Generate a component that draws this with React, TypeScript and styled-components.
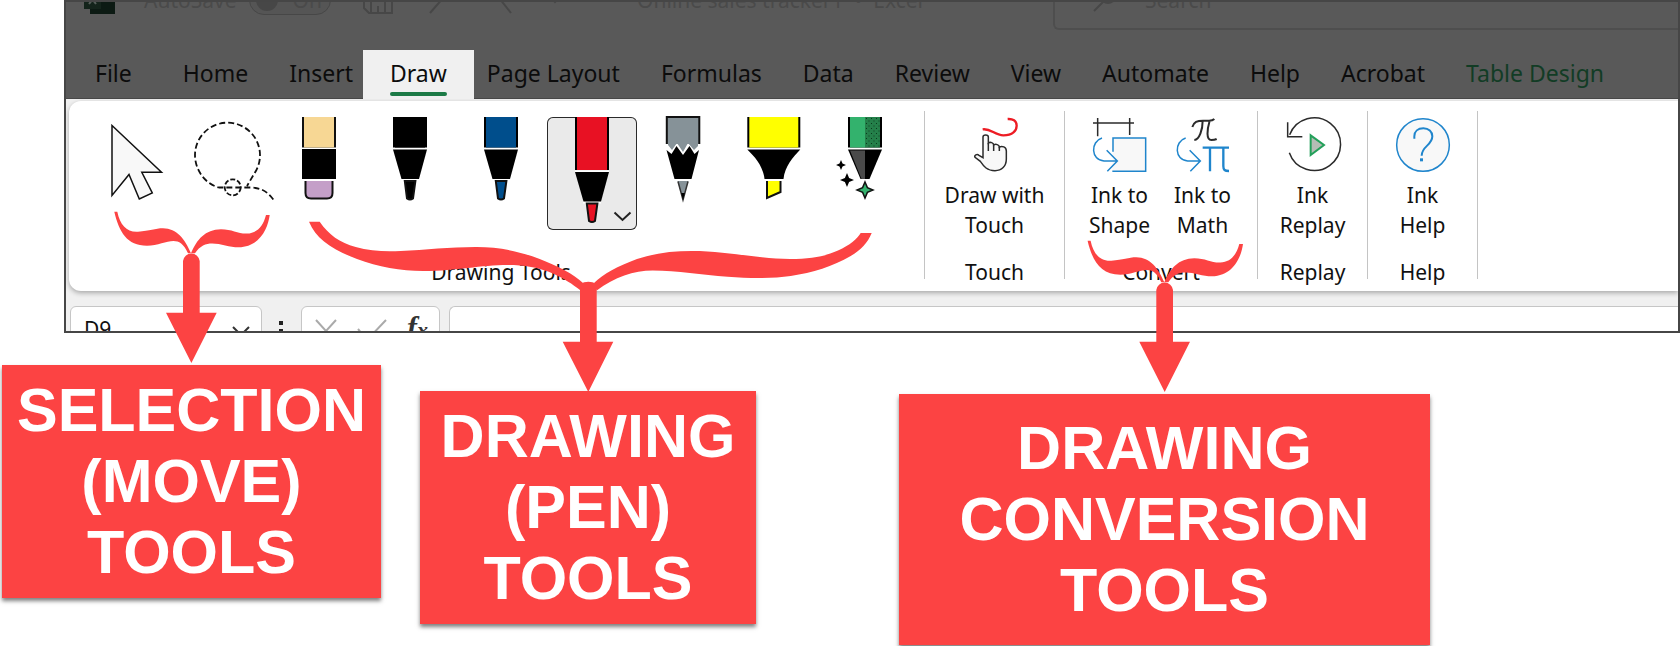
import React from 'react';
import styled, { createGlobalStyle } from 'styled-components';

const RED = '#fc4343';
const UI_FONT = '"Noto Sans", "Open Sans", sans-serif';

const GlobalStyle = createGlobalStyle`
  body { margin: 0; background: #fff; }
  *, *::before, *::after { box-sizing: border-box; }
  button, input { font: inherit; color: inherit; border: 0; background: none; padding: 0; margin: 0; }
  svg { display: block; overflow: visible; }
`;

const Page = styled.main`
  position: relative;
  overflow: hidden;
  font-family: ${UI_FONT};
  color: #111;
`;

const Window = styled.section`
  margin-left: 64px;
  border: 2px solid #464646;
  overflow: hidden;
  background: #f0f0f0;
`;

/* Title bar */
const TitleBar = styled.header`
  display: flex;
  align-items: center;
  height: 64px;
  margin-top: -34px;
  padding-left: 18px;
  background: #595959;
  color: #4a4a4a;
  font-size: 21px;
  line-height: 30px;
  white-space: nowrap;
`;
const AutoSave = styled.label`
  display: flex;
  align-items: center;
  gap: 12px;
  width: 219px;
  margin-left: 29px;
`;
const Toggle = styled.button`
  display: flex;
  align-items: center;
  gap: 15px;
  width: 82px;
  height: 30px;
  padding-left: 6px;
  border: 1px solid #474747;
  border-radius: 15px;
  background: #555;
  line-height: 28px;
`;
const Knob = styled.span`
  width: 22px;
  height: 22px;
  border-radius: 50%;
  background: #474747;
`;
const QuickAccess = styled.div`
  display: flex;
  align-items: center;
  gap: 36px;
  width: 274px;
`;
const DocTitle = styled.span`
  width: 416px;
`;
const SearchBox = styled.label`
  display: flex;
  flex: 1;
  align-items: center;
  gap: 30px;
  height: 60px;
  padding-left: 38px;
  border: 2px solid #4e4e4e;
  border-right: 0;
  border-radius: 6px 0 0 6px;

  input { flex: 1; min-width: 0; }
  input::placeholder { color: #4a4a4a; opacity: 1; }
`;

/* Ribbon tabs */
const TabRow = styled.nav`
  display: flex;
  gap: 1px;
  padding: 18px 0 0 9px;
  background: #595959;
  box-shadow: inset 0 -1px #484848;
`;
const Tab = styled.button<{ $active?: boolean; $accent?: boolean; $first?: boolean }>`
  display: flex;
  flex-direction: column;
  align-items: center;
  height: 49px;
  padding: ${p => (p.$active ? '7px 27px 0' : '7px 20px 0')};
  margin: ${p => (p.$active ? '0 -8px 0 -11px' : p.$first ? '0 10px 0 0' : '0')};
  font-size: 23px;
  line-height: 32px;
  white-space: nowrap;
  color: ${p => (p.$accent ? '#123c25' : '#0c0c0c')};
  background: ${p => (p.$active ? '#f0f0f0' : 'none')};

  &::after {
    content: '';
    width: 100%;
    height: 4px;
    margin-top: 3px;
    border-radius: 2px;
    background: ${p => (p.$active ? '#1c7a46' : 'none')};
  }
`;

/* Ribbon */
const Ribbon = styled.div`
  display: flex;
  height: 190px;
  margin: 2px 0 0 3px;
  border-radius: 12px 0 0 12px;
  background: #fff;
  box-shadow: 0 2px 5px rgba(0, 0, 0, 0.3);
`;
const Group = styled.section<{ $pad: string }>`
  display: flex;
  flex-direction: column;
  justify-content: space-between;
  align-items: center;
  padding: ${p => p.$pad};
`;
const GroupLabel = styled.span`
  font-size: 21px;
  line-height: 24px;
`;
const Divider = styled.span`
  width: 1px;
  margin: 10px 0 12px;
  background: #c4c4c4;
`;
const Tools = styled.div`
  display: flex;
  gap: 1px;
`;
const Tool = styled.button<{ $selected?: boolean }>`
  width: 90px;
  height: 113px;
  border-radius: 6px;
  background: ${p => (p.$selected ? '#eaeaea' : 'none')};
  box-shadow: ${p => (p.$selected ? 'inset 0 0 0 1px #2a2a2a' : 'none')};
`;
const Commands = styled.div`
  display: flex;
`;
const Command = styled.button<{ $width: number }>`
  display: flex;
  flex-direction: column;
  align-items: center;
  gap: 8px;
  width: ${p => p.$width}px;
  padding-top: 1px;
  font-size: 21px;
  line-height: 30px;
  text-align: center;
`;

/* Formula bar */
const FormulaBar = styled.div`
  display: flex;
  height: 40px;
  padding: 15px 0 0 4px;
`;
const Field = styled.div<{ $width?: number; $open?: boolean }>`
  display: flex;
  flex: ${p => (p.$width ? 'none' : '1')};
  align-items: center;
  justify-content: space-between;
  width: ${p => (p.$width ? `${p.$width}px` : 'auto')};
  height: 50px;
  padding: 0 11px 0 13px;
  border: 1px solid #c6c6c6;
  border-right-width: ${p => (p.$open ? 0 : 1)}px;
  border-radius: ${p => (p.$open ? '6px 0 0 6px' : '6px')};
  background: #fff;
  font-size: 21px;

  input { width: 100%; min-width: 0; padding-bottom: 4px; }
`;
const Grip = styled.svg`
  flex: none;
  margin: 15px 18px 0 17px;
`;
const FxButton = styled.button`
  padding-bottom: 8px;
  font: italic bold 30px/40px "Liberation Serif", serif;
  color: #333;

  sub { font-size: 22px; line-height: 0; vertical-align: 0; }
`;
const Spacer = styled.span`
  width: 9px;
`;

/* Annotations */
const Pointers = styled.svg`
  position: absolute;
  top: 0;
  left: 0;
  pointer-events: none;
`;
const Callouts = styled.div`
  display: flex;
  align-items: flex-start;
  padding: 32px 0 1px 2px;
`;
const Callout = styled.p<{ $width: number; $top: number; $left: number; $pad: number }>`
  flex: none;
  width: ${p => p.$width}px;
  margin: ${p => p.$top}px 0 0 ${p => p.$left}px;
  padding: ${p => p.$pad}px 0;
  background: ${RED};
  box-shadow: 0 3px 4px rgba(0, 0, 0, 0.5);
  color: #fff;
  font: bold 61px/71px "Liberation Sans", Arial, sans-serif;
  text-align: center;

  span { display: block; }
`;

const Art = ({ children }: { children: React.ReactNode }) => (
  <svg width="90" height="113" viewBox="0 0 90 113" aria-hidden="true">{children}</svg>
);

const PointerArt = () => (
  <Art>
    <path d="M20 8.5 69.5 55.3H49.8L60.3 76l-13 6L37 57.5 20 78.5Z" fill="#f8f8f8" stroke="#111" strokeWidth="1.5" />
  </Art>
);
const LassoArt = () => (
  <Art>
    <g fill="none" stroke="#111" strokeWidth="1.8" strokeDasharray="6 3">
      <path d="M90.3 82.5C84 74 78 71 68 70.5H36C22 67 12 53 12 38a32.5 32.5 0 1 1 59 19l-7 12" />
      <circle cx="49.7" cy="70.3" r="8" strokeDasharray="5 2" />
    </g>
  </Art>
);
const EraserArt = () => (
  <Art>
    <path d="M28 0h34v30.500H28z" fill="#111" />
    <path d="M30 0h30v30.500H30z" fill="#f7d794" />
    <path d="M28 32h34v30H28z" />
    <path d="M31.500 64v12q0 5.500 5.500 5.500h16q5.500 0 5.500-5.500V64" fill="#c49fc8" stroke="#111" strokeWidth="2" />
  </Art>
);
const PenArt = ({ color, drop = 0 }: { color: string; drop?: number }) => (
  <Art>
    <path d={`M28 0h34v${30.5 + drop}H28z`} />
    <path d={`M30 0h30v${30.5 + drop}H30z`} fill={color} />
    <g transform={`translate(0 ${drop})`}>
      <path d="M28 31h34v1.500H28zM36 62h18v2H36z" fill="#fff" />
      <path d="M28 32.500h34L54 62H36.500z" />
      <path d="M39.800 64h10.600l-2.400 17.500q-3 2-6 0z" fill={color} stroke="#111" strokeWidth="2" />
    </g>
  </Art>
);
const PencilArt = () => (
  <Art>
    <path d="M28.800 27V0h32.500v27" fill="#869298" stroke="#111" strokeWidth="2" />
    <path d="M30 1h30v28l-4 4-6-7-5 9-6-9-5 7-4-5z" fill="#869298" />
    <path d="M28.500 33l5 4 5-8 6.500 9 6.500-9 5 8 4.500-4L53.500 62h-17z" />
    <path d="M39.500 64h11L45 83z" fill="#869298" />
    <path d="M40 64.500 45 83l5-18.500" fill="none" stroke="#333" strokeWidth="1.500" />
    <path d="M43.200 76h3.600L45 83z" />
  </Art>
);
const MarkerArt = () => (
  <Art>
    <path d="M18.300 0h53v30.500h-53z" />
    <path d="M20.300 0h49v30.500h-49z" fill="#ff0" />
    <path d="M18.300 32.500h53C64 40 56 49 54.500 62h-19C34 49 26 40 18.300 32.500z" />
    <path d="M38 64v17l13.500-6V64" fill="#ff0" stroke="#111" strokeWidth="2" />
  </Art>
);
const star = (x: number, y: number, r: number) => {
  const k = r * 0.3;
  return `M${x} ${y - r}L${x + k} ${y - k} ${x + r} ${y} ${x + k} ${y + k} ${x} ${y + r} ${x - k} ${y + k} ${x - r} ${y} ${x - k} ${y - k}Z`;
};
const SparklePenArt = () => (
  <Art>
    <defs>
      <pattern id="specks" width="5" height="5" patternUnits="userSpaceOnUse">
        <rect width="5" height="5" fill="#24804a" />
        <path d="M1 1h1v1H1zM3.500 3.500h1v1h-1z" fill="#0a3a1e" />
      </pattern>
    </defs>
    <path d="M28 0h34v30.500H28z" />
    <path d="M30 0h15v30.500H30z" fill="#33b26d" />
    <path d="M45 0h15v30.500H45z" fill="url(#specks)" />
    <path d="M28 32.500h34L49.500 62h-9z" />
    <path d="M30 33.500h15V62h-3.500z" fill="#4a4a4a" />
    <path d={star(21, 48, 5)} />
    <path d={star(27, 63, 7)} />
    <path d={star(45, 73, 8)} fill="#33b26d" stroke="#111" strokeWidth="1.500" />
  </Art>
);

/* Command icons are drawn on a grid three times finer than their 54px box. */
const Icon = ({ children }: { children: React.ReactNode }) => (
  <svg width="54" height="54" viewBox="0 0 162 162" fill="none" stroke="#2b2b2b" strokeWidth="4.500" aria-hidden="true">{children}</svg>
);
const BLUE = '#1f85cc';
const TouchIcon = () => (
  <Icon>
    <path d="M44 34C68 30 80 52 106 52c28 0 40-14 40-29 0-15-12-21-27-20" stroke="#ed1c24" strokeWidth="7" />
    <path d="M45 119V57c0-8 16-8 16 0v18c6-4 16-1 16 6 6-4 17-1 17 6 8-4 21-1 21 12v24c0 22-14 35-34 35-24 0-33-12-44-28L21 118c-3-6 6-11 12-6z" fill="#f8f8f8" />
    <path d="M61 75v24M77 80v19M94 86v13" />
  </Icon>
);
const ShapeIcon = () => (
  <Icon>
    <path d="M60 101V60h98v100H58" fill="#f8f8f8" stroke={BLUE} />
    <path d="M0 15h123M14 0v55M110 0v51" />
    <path d="M27 60C-8 71-7 126 33 129h39M41 97l32 32-30 31" stroke={BLUE} />
  </Icon>
);
const MathIcon = () => (
  <Icon>
    <path d="M49 27c5-15 14-19 32-19h18c9 0 12-1 16-5M80 8c0 27-10 57-25 58M101 8c-8 27-11 58 5 58 8 0 12-1 16-3" strokeWidth="6" />
    <path d="M80 89h79M102 89v71M142 89v55c0 12 4 15 17 15" stroke={BLUE} strokeWidth="7" />
    <path d="M29 60C-6 71-5 126 35 129h37M41 97l32 32-30 31" stroke={BLUE} />
  </Icon>
);
const ReplayIcon = () => (
  <Icon>
    <path d="M10 104A79 79 0 1 0 11 50M5 13v43h44" />
    <path d="M74 52l40 29-40 30z" fill="#b5bdb5" stroke="#23a05a" strokeWidth="6" />
  </Icon>
);
const HelpIcon = () => (
  <Icon>
    <circle cx="81" cy="81" r="79" fill="#f8f8f8" stroke={BLUE} />
    <path d="M55 62v-7c0-15 11-24 27-24s27 10 27 24c0 27-32 29-32 58" stroke={BLUE} strokeWidth="6" />
    <path d="M72 121h9v9h-9z" fill={BLUE} stroke="none" />
  </Icon>
);

const Line = ({ d, width, height, color = '#474747', stroke = 2 }: { d: string; width: number; height: number; color?: string; stroke?: number }) => (
  <svg width={width} height={height} viewBox={`0 0 ${width} ${height}`} fill="none" stroke={color} strokeWidth={stroke} aria-hidden="true">
    <path d={d} />
  </svg>
);

const TABS = ['File', 'Home', 'Insert', 'Draw', 'Page Layout', 'Formulas', 'Data', 'Review', 'View', 'Automate', 'Help', 'Acrobat', 'Table Design'];

const TOOLS: { name: string; art: React.ReactNode; selected?: boolean }[] = [
  { name: 'Select', art: <PointerArt /> },
  { name: 'Lasso select', art: <LassoArt /> },
  { name: 'Eraser', art: <EraserArt /> },
  { name: 'Black pen', art: <PenArt color="#000" /> },
  { name: 'Blue pen', art: <PenArt color="#004e8c" /> },
  { name: 'Red pen', art: <PenArt color="#e81123" drop={22.5} />, selected: true },
  { name: 'Pencil', art: <PencilArt /> },
  { name: 'Highlighter', art: <MarkerArt /> },
  { name: 'Action pen', art: <SparklePenArt /> },
];

const GROUPS = [
  { label: 'Touch', pad: '16px 18px 7px', items: [{ lines: ['Draw with', 'Touch'], width: 103, icon: <TouchIcon /> }] },
  {
    label: 'Convert',
    pad: '16px 13px 7px',
    items: [
      { lines: ['Ink to', 'Shape'], width: 83, icon: <ShapeIcon /> },
      { lines: ['Ink to', 'Math'], width: 83, icon: <MathIcon /> },
    ],
  },
  { label: 'Replay', pad: '16px 13px 7px', items: [{ lines: ['Ink', 'Replay'], width: 83, icon: <ReplayIcon /> }] },
  { label: 'Help', pad: '16px 13px 7px', items: [{ lines: ['Ink', 'Help'], width: 83, icon: <HelpIcon /> }] },
];

const CALLOUTS = [
  { lines: ['SELECTION', '(MOVE)', 'TOOLS'], width: 379, top: 0, left: 0, pad: 10 },
  { lines: ['DRAWING', '(PEN)', 'TOOLS'], width: 336, top: 26, left: 39, pad: 10 },
  { lines: ['DRAWING', 'CONVERSION', 'TOOLS'], width: 531, top: 29, left: 143, pad: 19 },
];

const SmallBrace = () => (
  <g>
    <path d="M114.300 211.700h3C120 225 127 232.500 138 231.700c12-.7 17-3.400 25-3.400 14 .2 22 11 28 25 6-14 14-23.500 30-24 11 0 17 4.600 26 4.300 10-.6 16-7 19-18.600h3.700C268 228 260 247 238.500 247.300c-15 0-32-12-43.500 6h-7c-10-22-22-7.600-41-7.600-20 0-28-14-32.700-34z" />
    <path d="M183 261a8.400 8.400 0 0 1 16.700 0v51.700h17L191.400 363 166 312.700h17z" />
  </g>
);
const WideBrace = () => (
  <g>
    <path d="M309 221.700h10.700c9 13 20 21 36 25.300 14 4 30 4.800 45 3.900 25-1 50-4 76-3.900 22 0 42 4 63 12 18 7 34 15 43.300 24l-3 7c-8-6-15-11-26-16-16-7-30-9-46-9-28 0-50 5.900-85 6-22 0-45-4-66-12-24-9-41-20-48-37.300z" />
    <path d="M594 283c9-9 24-17 43-24 18-6 36-8 55-8 36 0 66 8 98 8 22 0 36-3 48-8.500 12-5.500 19-11.500 22.700-17.500h11c-4 10-11 17-21 23-18 10.500-38 16.500-60 20-18 2.500-40 2.500-63 .7-26-2-50-6.300-75-6.300-19 0-38 6.600-56 20z" />
    <path d="M580 284q8.300-4.500 16.700 0v57.700h16.600L588.300 392l-25.600-50.300H580z" />
  </g>
);

export default function App() {
  return (
    <Page>
      <GlobalStyle />
      <Window>
        <TitleBar>
          <svg width="31" height="30" viewBox="0 0 31 30" aria-hidden="true">
            <path d="M6 0h25v29H6z" fill="#0c1a13" />
            <path d="M0 5h17v19H0z" fill="#14241b" />
            <path d="M5 10l7 9M12 10l-7 9" stroke="#555e59" strokeWidth="2" />
          </svg>
          <AutoSave>
            AutoSave
            <Toggle type="button"><Knob />On</Toggle>
          </AutoSave>
          <QuickAccess>
            <Line width={30} height={28} d="M1 1h28v26H6l-5-5zM8 27V15h14v12M15 27v-7" />
            <Line width={24} height={28} d="M16 1H23M22 3 1 27" />
            <Line width={24} height={28} d="M3 3 22 27" />
            <Line width={12} height={8} d="M1 1l5 5 5-5" />
          </QuickAccess>
          <DocTitle>Online sales tracker1 &nbsp;•&nbsp; Excel</DocTitle>
          <SearchBox>
            <Line width={22} height={24} d="M1 23 10 14M8 8a7 7 0 1 0 14 0 7 7 0 1 0-14 0" />
            <input aria-label="Search" placeholder="Search" />
          </SearchBox>
        </TitleBar>

        <TabRow aria-label="Ribbon tabs">
          {TABS.map(name => (
            <Tab key={name} type="button" $first={name === 'File'} $active={name === 'Draw'} $accent={name === 'Table Design'}>
              {name}
            </Tab>
          ))}
        </TabRow>

        <Ribbon>
          <Group $pad="16px 14px 7px 23px">
            <Tools>
              {TOOLS.map(t => (
                <Tool key={t.name} type="button" aria-label={t.name} aria-pressed={!!t.selected} $selected={t.selected}>
                  {t.selected ? (
                    <svg width="90" height="113" viewBox="0 0 90 113" aria-hidden="true">
                      {t.art}
                      <path d="M67.500 95.500l8 7.500 8-7.500" fill="none" stroke="#222" strokeWidth="2" />
                    </svg>
                  ) : t.art}
                </Tool>
              ))}
            </Tools>
            <GroupLabel>Drawing Tools</GroupLabel>
          </Group>
          <Divider />
          {GROUPS.map(g => (
            <React.Fragment key={g.label}>
              <Group $pad={g.pad}>
                <Commands>
                  {g.items.map(c => (
                    <Command key={c.lines.join(' ')} type="button" $width={c.width}>
                      {c.icon}
                      <span>{c.lines[0]}<br />{c.lines[1]}</span>
                    </Command>
                  ))}
                </Commands>
                <GroupLabel>{g.label}</GroupLabel>
              </Group>
              <Divider />
            </React.Fragment>
          ))}
        </Ribbon>

        <FormulaBar>
          <Field $width={192}>
            <input aria-label="Name box" defaultValue="D9" />
            <Line width={18} height={10} color="#333" d="M1 1l8 8 8-8" />
          </Field>
          <Grip width="4" height="20" viewBox="0 0 4 20" aria-hidden="true">
            <path d="M0 0h4v4H0zM0 8h4v4H0zM0 16h4v4H0z" fill="#222" />
          </Grip>
          <Field $width={139}>
            <Line width={22} height={24} color="#aaa" d="M1 1l20 22M21 1 1 23" />
            <Line width={30} height={24} color="#aaa" d="M1 10l9 11L29 1" />
            <FxButton type="button" aria-label="Insert function">f<sub>x</sub></FxButton>
          </Field>
          <Spacer />
          <Field $open>
            <input aria-label="Formula" />
          </Field>
        </FormulaBar>
      </Window>

      <Callouts>
        {CALLOUTS.map(c => (
          <Callout key={c.lines.join(' ')} $width={c.width} $top={c.top} $left={c.left} $pad={c.pad}>
            {c.lines.map(l => <span key={l}>{l}</span>)}
          </Callout>
        ))}
      </Callouts>

      <Pointers width="1300" height="400" viewBox="0 0 1300 400" fill={RED} aria-hidden="true">
        <SmallBrace />
        <WideBrace />
        <g transform="translate(973.300 29)"><SmallBrace /></g>
      </Pointers>
    </Page>
  );
}
